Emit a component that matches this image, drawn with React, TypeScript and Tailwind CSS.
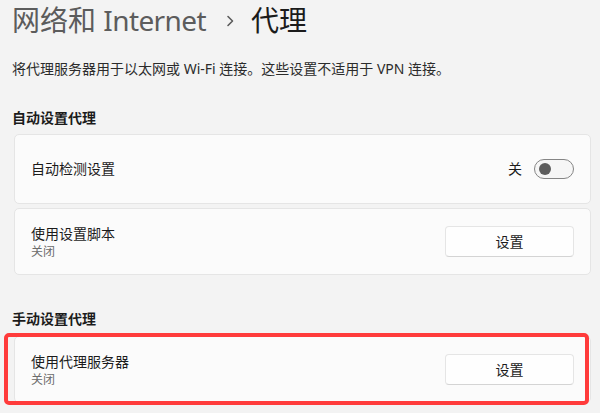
import React from "react";

const font = { fontFamily: '"Noto Sans", "Noto Sans CJK SC", sans-serif' };

function Card({ children, className = "" }: { children: React.ReactNode; className?: string }) {
  return (
    <div
      className={
        "flex items-center justify-between rounded-[5px] border border-[#e5e5e5] bg-[#fbfbfb] pl-[16px] pr-[16px] " +
        className
      }
    >
      {children}
    </div>
  );
}

function SetButton() {
  return (
    <button className="flex h-[31px] w-[129px] items-center justify-center rounded-[4px] border border-[#e5e5e5] border-b-[#d4d4d4] bg-[#fefefe] text-[14px] leading-[20px] text-[#1b1b1b]">
      设置
    </button>
  );
}

export default function App() {
  return (
    <div className="h-[413px] w-[600px] overflow-hidden bg-[#f3f3f3]" style={font}>
      <div className="pl-[12px] pr-[9px]">
        <div className="mt-[2px] flex items-center text-[28px] leading-[36px]">
          <span className="text-[#5c5c5c]">
            网络和 <span className="tracking-[-0.6px]">Internet</span>
          </span>
          <svg className="ml-[20px] mr-[17px] mt-[1px]" width="8" height="12" viewBox="0 0 8 12" fill="none">
            <path d="M2 1.5 L6.5 6 L2 10.5" stroke="#5c5c5c" strokeWidth="1.6" strokeLinecap="round" strokeLinejoin="round" />
          </svg>
          <span className="text-[#1b1b1b]">代理</span>
        </div>
        <div className="mt-[21px] text-[14px] leading-[20px] text-[#2b2b2b]">
          将代理服务器用于以太网或 Wi-Fi 连接。这些设置不适用于 VPN 连接。
        </div>
        <div className="mt-[29px] text-[14px] font-semibold leading-[20px] text-[#1b1b1b]">自动设置代理</div>
        <div className="ml-[2px] mt-[6px] flex flex-col gap-[4px]">
          <Card className="h-[70px]">
            <span className="text-[14px] leading-[20px] text-[#1b1b1b]">自动检测设置</span>
            <div className="flex items-center gap-[12px]">
              <span className="text-[14px] leading-[20px] text-[#1b1b1b]">关</span>
              <div className="flex h-[20px] w-[40px] items-center rounded-full border border-[#858585] bg-[#f6f6f6] pl-[4px]">
                <div className="h-[12px] w-[12px] rounded-full bg-[#5d5d5d]" />
              </div>
            </div>
          </Card>
          <Card className="h-[67px]">
            <div className="flex flex-col">
              <span className="text-[14px] leading-[20px] text-[#1b1b1b]">使用设置脚本</span>
              <span className="text-[12px] leading-[16px] text-[#6b6b6b]">关闭</span>
            </div>
            <SetButton />
          </Card>
        </div>
        <div className="mt-[34px] text-[14px] font-semibold leading-[20px] text-[#1b1b1b]">手动设置代理</div>
        <div className="relative ml-[2px] mt-[7px]">
          <Card className="h-[67px]">
            <div className="flex flex-col">
              <span className="text-[14px] leading-[20px] text-[#1b1b1b]">使用代理服务器</span>
              <span className="text-[12px] leading-[16px] text-[#6b6b6b]">关闭</span>
            </div>
            <SetButton />
          </Card>
          <div className="pointer-events-none absolute bottom-[-2px] left-[-10px] right-[2px] top-[-3px] rounded-[5px] border-[4px] border-[#ff3b3b]" />
        </div>
      </div>
    </div>
  );
}
